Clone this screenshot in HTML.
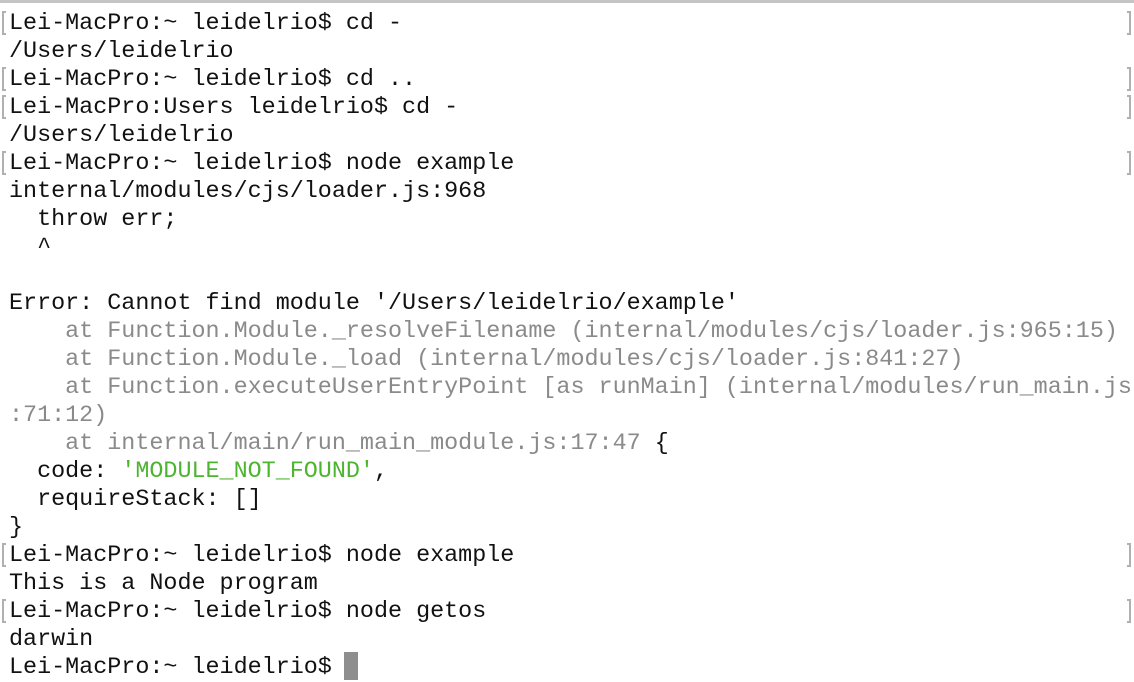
<!DOCTYPE html>
<html><head><meta charset="utf-8"><style>
html,body{margin:0;padding:0;width:1134px;height:682px;overflow:hidden;background:#fff}
.top{position:absolute;left:0;top:0;width:1134px;height:3px;background:#c4c4c4}
.t{position:absolute;left:9px;top:10px;font-family:"Liberation Mono",monospace;font-size:23.4px;line-height:28px;color:#111;white-space:pre}
.g{color:#8a8a8a}.gr{color:#4cb52f}
.bl,.br{position:absolute;width:4px;height:24px;border:2px solid #b0b0b0;box-sizing:border-box}
.bl{left:2px;border-right:none}.br{left:1127px;border-left:none}
.cur{position:absolute;left:344px;top:652px;width:14px;height:28px;background:#8e8e8e}
</style></head><body>
<div class="top"></div>
<div class="t">Lei-MacPro:~ leidelrio$ cd -
/Users/leidelrio
Lei-MacPro:~ leidelrio$ cd ..
Lei-MacPro:Users leidelrio$ cd -
/Users/leidelrio
Lei-MacPro:~ leidelrio$ node example
internal/modules/cjs/loader.js:968
  throw err;
  ^

Error: Cannot find module '/Users/leidelrio/example'
<span class="g">    at Function.Module._resolveFilename (internal/modules/cjs/loader.js:965:15)
    at Function.Module._load (internal/modules/cjs/loader.js:841:27)
    at Function.executeUserEntryPoint [as runMain] (internal/modules/run_main.js
:71:12)
    at internal/main/run_main_module.js:17:47</span> {
  code: <span class="gr">'MODULE_NOT_FOUND'</span>,
  requireStack: []
}
Lei-MacPro:~ leidelrio$ node example
This is a Node program
Lei-MacPro:~ leidelrio$ node getos
darwin
Lei-MacPro:~ leidelrio$ </div>
<div class="bl" style="top:11px"></div><div class="br" style="top:11px"></div>
<div class="bl" style="top:67px"></div><div class="br" style="top:67px"></div>
<div class="bl" style="top:95px"></div><div class="br" style="top:95px"></div>
<div class="bl" style="top:151px"></div><div class="br" style="top:151px"></div>
<div class="bl" style="top:543px"></div><div class="br" style="top:543px"></div>
<div class="bl" style="top:599px"></div><div class="br" style="top:599px"></div>
<div class="cur"></div>
</body></html>
